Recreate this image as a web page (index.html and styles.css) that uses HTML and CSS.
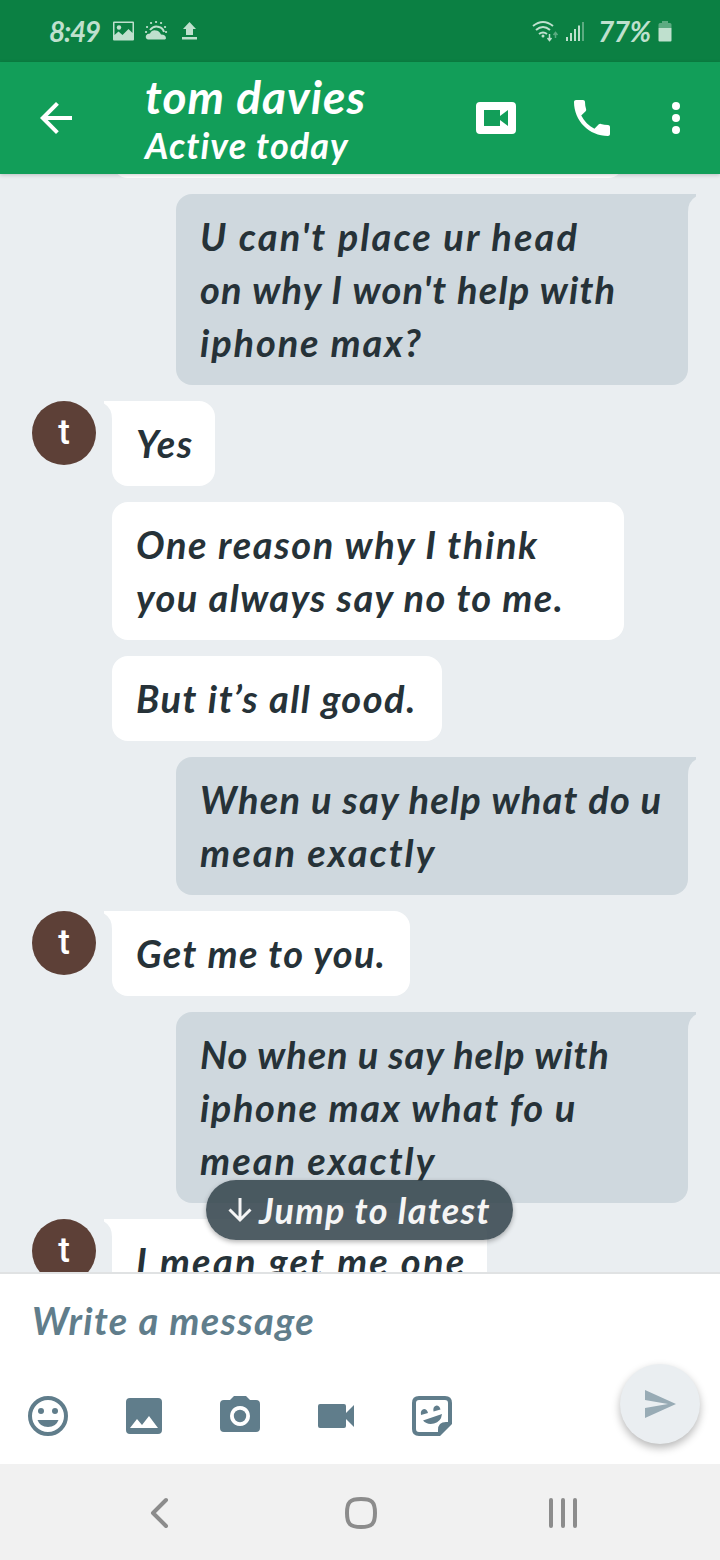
FILE: index.html
```html
<!DOCTYPE html>
<html lang="en">
<head>
<meta charset="utf-8">
<title>tom davies</title>
<link rel="stylesheet" href="styles.css">
</head>
<body>
<div class="phone">
  <div class="status">
    <span class="fit time">8:49</span>
    <svg class="status-left" width="90" height="24" viewBox="0 0 90 24">
      <path fill-rule="evenodd" d="M2 2.500h19q1 0 1 1v17q0 1-1 1H2q-1 0-1-1v-17q0-1 1-1zM2.500 4v12l4-3.500 4 3.500 6-6 4 4V4z"/>
      <circle cx="7" cy="8.500" r="2.200"/>
      <path d="M36 20.500q-3-1-2-4 1-2 4-2 2-4 6-3 3 0 5 4 5 0 5 4l-1 1z"/>
      <path class="stroke" d="M38 11q4-5 9-3 4 1 5 5"/>
      <path class="dots" d="M34 13h.1M35 8h.1M39 4h.1M44 3h.1M49 4h.1M53 8h.1M54 13h.1"/>
      <path d="M77.500 3L84 10h-3v6h-7v-6h-3zM70 18h15v2.500H70z"/>
    </svg>
    <svg class="status-right" width="56" height="24" viewBox="0 0 56 24">
      <path class="stroke" d="M2 7q10-8 20 0M5 11q7-6 14 0M8 15q4-3 8 0"/>
      <circle cx="12" cy="17" r="1.500"/>
      <path class="thin" d="M18.500 15v6M16.500 19l2 2.500 2-2.500"/>
      <path class="thin dim" d="M24.500 19v-5M22.500 16l2-2.500 2 2.500"/>
      <path d="M35 18h2v4h-2zM39 14h2v8h-2zM43 10h2v12h-2zM47 6.500h2V22h-2z"/>
      <path class="dim" d="M51 3h2v19h-2z"/>
    </svg>
    <span class="fit percent">77%</span>
    <svg class="battery" width="14" height="22" viewBox="0 0 14 22">
      <path class="dim" d="M4 1h6v2h2q1.500 0 1.500 1.500V8H.5V4.500Q.5 3 2 3h2z"/>
      <path d="M.5 8h13v12.500q0 1-1 1h-11q-1 0-1-1z"/>
    </svg>
  </div>

  <header class="bar">
    <svg class="back" width="32" height="32" viewBox="0 0 32 32"><path d="M32 14H7.700l11.200-11.200L16 0 0 16l16 16 2.800-2.800L7.700 18H32z"/></svg>
    <div class="who">
      <div class="name"><span class="fit">tom davies</span></div>
      <div class="seen"><span class="fit">Active today</span></div>
    </div>
    <svg class="meet" width="40" height="32" viewBox="0 0 40 32"><path fill-rule="evenodd" d="M4 0h32q4 0 4 4v24q0 4-4 4H4q-4 0-4-4V4q0-4 4-4zM8 8v16h16v-6l8 6V8l-8 6V8z"/></svg>
    <svg class="call" width="36" height="36" viewBox="3 3 18 18"><path d="M6.620 10.790c1.440 2.830 3.760 5.140 6.590 6.590l2.200-2.200c.27-.27.67-.36 1.020-.24 1.120.37 2.330.57 3.570.57.55 0 1 .45 1 1V20c0 .55-.45 1-1 1-9.390 0-17-7.610-17-17 0-.55.45-1 1-1h3.500c.55 0 1 .45 1 1 0 1.250.2 2.450.57 3.570.11.35.03.74-.25 1.020z"/></svg>
    <svg class="more" width="8" height="32" viewBox="0 0 8 32"><circle cx="4" cy="4" r="4"/><circle cx="4" cy="16" r="4"/><circle cx="4" cy="28" r="4"/></svg>
  </header>

  <main class="chat">
    <div class="row"><div class="bubble clipped"></div></div>
    <div class="row mine"><div class="bubble wide">
      <svg class="tail" width="8" height="18" viewBox="0 0 8 18"><path d="M0 0h8v2.500Q0 7 0 18z"/></svg>
      <span class="fit a1">U can't place ur head</span><span class="fit a2">on why I won't help with</span><span class="fit a3">iphone max?</span>
    </div></div>
    <div class="row"><div class="avatar">t</div><div class="bubble w-yes">
      <svg class="tail" width="8" height="18" viewBox="0 0 8 18"><path d="M8 0H0v2.500Q8 7 8 18z"/></svg>
      <span class="fit b1">Yes</span>
    </div></div>
    <div class="row"><div class="bubble wide">
      <span class="fit c1">One reason why I think</span><span class="fit c2">you always say no to me.</span>
    </div></div>
    <div class="row"><div class="bubble w-good"><span class="fit d1">But it’s all good.</span></div></div>
    <div class="row mine"><div class="bubble wide">
      <svg class="tail" width="8" height="18" viewBox="0 0 8 18"><path d="M0 0h8v2.500Q0 7 0 18z"/></svg>
      <span class="fit e1">When u say help what do u</span><span class="fit e2">mean exactly</span>
    </div></div>
    <div class="row"><div class="avatar">t</div><div class="bubble w-get">
      <svg class="tail" width="8" height="18" viewBox="0 0 8 18"><path d="M8 0H0v2.500Q8 7 8 18z"/></svg>
      <span class="fit f1">Get me to you.</span>
    </div></div>
    <div class="row mine"><div class="bubble wide">
      <svg class="tail" width="8" height="18" viewBox="0 0 8 18"><path d="M0 0h8v2.500Q0 7 0 18z"/></svg>
      <span class="fit g1">No when u say help with</span><span class="fit g2">iphone max what fo u</span><span class="fit e2">mean exactly</span>
    </div></div>
    <div class="row"><div class="avatar">t</div><div class="bubble w-mean">
      <svg class="tail" width="8" height="18" viewBox="0 0 8 18"><path d="M8 0H0v2.500Q8 7 8 18z"/></svg>
      <span class="fit h1">I mean get me one</span>
    </div></div>
    <div class="jump">
      <svg width="24" height="24" viewBox="0 0 24 24"><path d="M12 0v22M1.500 11.500L12 22l10.500-10.500"/></svg>
      <span class="fit">Jump to latest</span>
    </div>
  </main>

  <footer class="compose">
    <div class="hint"><span class="fit">Write a message</span></div>
    <div class="tools">
      <svg width="40" height="40" viewBox="0 0 40 40"><circle class="ring" cx="20" cy="20" r="18"/><circle cx="13" cy="15" r="3"/><circle cx="27" cy="15" r="3"/><path d="M9.500 24h21Q28 31 20 31T9.500 24z"/></svg>
      <svg width="40" height="40" viewBox="0 0 40 40"><path fill-rule="evenodd" d="M6 2h28q4 0 4 4v28q0 4-4 4H6q-4 0-4-4V6q0-4 4-4zM6 32h28l-9-12-7 9-5-6z"/></svg>
      <svg width="40" height="40" viewBox="0 0 40 40"><path fill-rule="evenodd" d="M14 0h12l4 4h6q4 0 4 4v24q0 4-4 4H4q-4 0-4-4V8q0-4 4-4h6zM20 10a10 10 0 1 0 .01 0z"/><circle cx="20" cy="20" r="6.200"/></svg>
      <svg width="40" height="40" viewBox="0 0 40 40"><path d="M4 8h24q2 0 2 2v7l8-8v22l-8-8v7q0 2-2 2H4q-2 0-2-2V10q0-2 2-2z"/></svg>
      <svg width="40" height="40" viewBox="0 0 40 40"><path class="ring" d="M27 38H7q-5 0-5-5V7q0-5 5-5h26q5 0 5 5v20"/><path d="M26 40v-6q0-8 8-8h6v2L28 40zM9 19q-1-5 3-6 3 0 4 4zM21.500 15.500q-1-5 3-6 3 0 4 4zM11 24.500L30 18q-1 8-8 9.500-7 1.500-11-3z"/></svg>
    </div>
    <div class="send"><svg width="31" height="28" viewBox="0 0 31 28"><path d="M0 0l31 14L0 28V18l23-4L0 10z"/></svg></div>
  </footer>

  <nav class="nav">
    <svg width="520" height="96" viewBox="100 1464 520 96">
      <path class="line" d="M166 1500l-13 13 13 13"/>
      <path class="line" d="M361 1499c11 0 14 3 14 14s-3 14-14 14-14-3-14-14 3-14 14-14z"/>
      <path class="line" d="M551 1500v26M563 1500v26M575 1500v26"/>
    </svg>
  </nav>
</div>
</body>
</html>
```
FILE: styles.css
```css
* { box-sizing: border-box; }
body { margin: 0; font-family: Lato, "Open Sans", sans-serif; font-style: italic; font-weight: 700; }
.phone { width: 720px; height: 1560px; display: flex; flex-direction: column; overflow: hidden; }
svg { display: block; flex: none; overflow: visible; }
.fit { display: block; white-space: nowrap; font-variant-ligatures: none; }

.status { height: 62px; flex: none; background: #0b8043; color: #bfe0ce; fill: #bfe0ce; display: flex; align-items: center; padding-left: 49px; font-size: 28px; }
.status .stroke { fill: none; stroke: #bfe0ce; stroke-width: 2; }
.status .dots { stroke: #bfe0ce; stroke-width: 2.200; stroke-linecap: round; }
.status .thin { fill: none; stroke: #bfe0ce; stroke-width: 1.500; }
.status .dim { opacity: .45; }
.time { width: 51px; letter-spacing: -1.300px; }
.status-left { margin-left: 12px; }
.status-right { margin-left: 329px; }
.percent { width: 58px; margin-left: 11px; letter-spacing: -.4px; }
.battery { margin-left: 2px; }

.bar { height: 112px; flex: none; background: #129e59; color: #fff; fill: #fff; display: flex; align-items: center; padding-left: 40px; position: relative; z-index: 2; box-shadow: 0 1px 4px rgba(0,0,0,.2); }
.who { width: 331px; margin-left: 73px; padding-top: 2px; }
.name { font-size: 46px; line-height: 52px; letter-spacing: 1.050px; }
.seen { font-size: 36px; line-height: 44px; letter-spacing: 1.050px; }
.call { margin-left: 58px; }
.more { margin-left: 62px; }

.chat { height: 1100px; flex: none; background: #eaeef1; position: relative; overflow: hidden; display: flex; flex-direction: column; gap: 16px; border-bottom: 2px solid #e0e2e3; color: #263238; font-size: 38px; line-height: 53px; }
.row { flex: none; display: flex; padding-left: 112px; }
.row:has(.avatar) { padding-left: 32px; gap: 16px; }
.mine { padding-left: 176px; }
.bubble { position: relative; background: #fff; fill: #fff; border-radius: 16px; padding: 16px 24px; }
.wide { width: 512px; }
.mine .bubble { background: #cfd8de; fill: #cfd8de; border-top-right-radius: 0; }
.row:has(.avatar) .bubble { border-top-left-radius: 0; }
.clipped { width: 512px; height: 85px; margin-top: -81px; }
.tail { position: absolute; top: 0; left: -8px; }
.mine .tail { left: auto; right: -8px; }
.w-yes { width: 103px; }
.w-good { width: 330px; }
.w-get { width: 298px; }
.w-mean { width: 375px; }
.a1 { letter-spacing: 2.100px; }
.a2 { letter-spacing: 1.200px; }
.a3 { letter-spacing: 1.850px; }
.b1 { letter-spacing: 1.500px; }
.c1 { letter-spacing: 1.600px; }
.c2 { letter-spacing: 1.400px; }
.d1 { letter-spacing: 1.500px; }
.e1 { letter-spacing: 1.230px; }
.e2 { letter-spacing: 2px; }
.f1 { letter-spacing: 1.350px; }
.g1 { letter-spacing: .87px; }
.g2 { letter-spacing: 1.550px; }
.h1 { letter-spacing: 2.300px; }
.avatar { width: 64px; height: 64px; flex: none; border-radius: 50%; background: #5d4037; color: #fff; font: 500 35px/64px Roboto, sans-serif; text-align: center; }
.jump { position: absolute; left: 206px; top: 1006px; width: 307px; height: 60px; border-radius: 30px; background: rgba(55,71,79,.88); color: #f5f5f5; display: flex; align-items: center; gap: 7px; padding-left: 22px; font-size: 36px; letter-spacing: 1.230px; box-shadow: 0 2px 5px rgba(0,0,0,.3); }
.jump path { fill: none; stroke: #f5f5f5; stroke-width: 3; }

.compose { height: 190px; flex: none; background: #fff; position: relative; }
.hint { height: 90px; padding: 20px 32px 0; color: #607d8b; font-size: 38px; line-height: 53px; letter-spacing: 1.350px; }
.tools { display: flex; gap: 56px; padding: 32px 28px 0; fill: #607d8b; }
.tools .ring { fill: none; stroke: #607d8b; stroke-width: 4; }
.send { position: absolute; right: 20px; top: 90px; width: 80px; height: 80px; border-radius: 50%; background: #eaeef1; fill: #98abb5; box-shadow: 0 4px 8px rgba(0,0,0,.28); display: flex; align-items: center; justify-content: center; }

.nav { height: 96px; flex: none; background: #f1f1f1; padding-left: 100px; }
.line { fill: none; stroke: #8c8c8c; stroke-width: 4; stroke-linecap: round; stroke-linejoin: round; }
```
